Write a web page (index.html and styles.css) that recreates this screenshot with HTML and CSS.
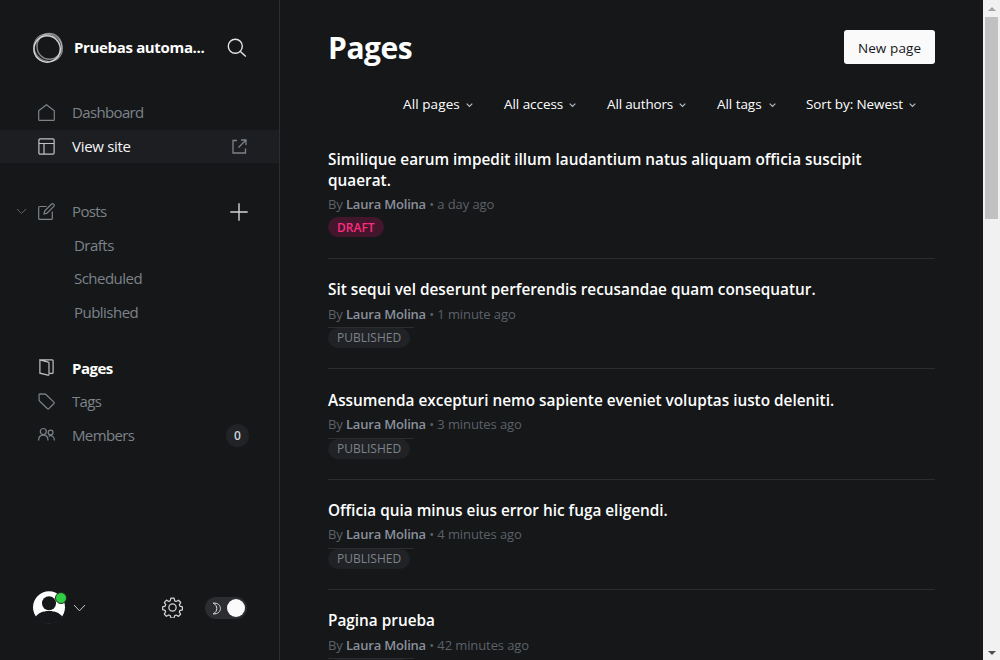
FILE: index.html
```html
<!DOCTYPE html>
<html lang="en">
<head>
<meta charset="utf-8">
<title>Pages</title>
<link rel="stylesheet" href="styles.css">
</head>
<body>
<div class="app">
  <aside class="sidebar">
    <header class="site">
      <svg class="site-logo" width="32" height="32" viewBox="0 0 32 32"><circle cx="15.1" cy="17" r="13.2" stroke-width="1.5"/><ellipse cx="17.4" cy="14.4" rx="12.4" ry="12.9" stroke-width="1.4" opacity=".6"/><ellipse cx="16" cy="15.8" rx="14.6" ry="13.3" transform="rotate(35 16 16)" stroke-width="1.2" opacity=".6"/></svg>
      <span class="site-name">Pruebas automa...</span>
      <svg class="search" width="20" height="20" viewBox="0 0 20 20"><circle cx="8.3" cy="8.3" r="7"/><path d="M13.4 13.4l5.4 5.2"/></svg>
    </header>
    <nav class="nav">
      <a class="item"><svg class="icon" viewBox="0 0 17 17"><path d="M.7 6.8L8.5.7l7.8 6.1v8.6q0 .9-.9.9H1.600q-.9 0-.9-.9z"/></svg><span class="label">Dashboard</span></a>
      <a class="item hover"><svg class="icon bright" viewBox="0 0 17 17"><rect x=".9" y=".9" width="15.200" height="15.200" rx="1.200"/><path d="M.9 5.500h15.200M6 5.500v10.600"/></svg><span class="label">View site</span>
        <svg class="external" width="15" height="15" viewBox="0 0 15 15"><path d="M5 1.500H1v12.500h12.500V9.500M6.500 8.500L14 1M9 1h5v5"/></svg></a>
      <a class="item posts"><svg class="caret" width="11" height="7" viewBox="0 0 11 7"><path d="M1 1l4.500 4.500L10 1"/></svg><svg class="icon" viewBox="0 0 17 17"><path d="M8.500 3.500H1.600q-.9 0-.9.900v11q0 .9.900.9h11.800q.9 0 .9-.9V8.500M6 11l.8-3.200L13.600 1q1.100-.8 2.100.2t.1 2.100L9 10.200z"/></svg><span class="label">Posts</span>
        <svg class="plus" width="18" height="18" viewBox="0 0 18 18"><path d="M9 .3v17.400M.3 9h17.400"/></svg></a>
      <a class="item sub"><span class="label">Drafts</span></a>
      <a class="item sub"><span class="label">Scheduled</span></a>
      <a class="item sub"><span class="label">Published</span></a>
      <a class="item current"><svg class="icon bright" viewBox="0 0 17 17"><path d="M1.900.8h12.300q.9 0 .9.900v11.800q0 .9-.9.900h-2.400M1.900.8v13.400l8 2q1.100.2 1.100-.9V4.200q0-.8-.8-1z"/></svg><span class="label">Pages</span></a>
      <a class="item"><svg class="icon" viewBox="0 0 17 17"><path d="M1 1.800q0-.9.900-.9l5.700.3 8.300 7.900q.7.700 0 1.400l-5 5.200q-.7.700-1.400 0L1.200 7.800z"/></svg><span class="label">Tags</span></a>
      <a class="item members"><svg class="icon" viewBox="0 0 17 17"><circle cx="5.300" cy="5.500" r="3"/><path d="M.6 14.500c0-3.300 1.900-5.300 4.700-5.300s4.700 2 4.700 5.300"/><circle cx="12.600" cy="6.500" r="2.400"/><path d="M10.600 10.200c3.300-1.500 5.800.5 5.800 4.300"/></svg><span class="label">Members</span><span class="count">0</span></a>
    </nav>
    <footer class="account">
      <span class="avatar"><svg width="34" height="34" viewBox="0 0 34 34"><circle cx="16" cy="16.200" r="16" fill="#fff"/><circle cx="16" cy="12.200" r="7" fill="#151719"/><path d="M2.600 26c2.400-4 7.400-6 13.400-6s11 2 13.400 6A16.500 16.500 0 0 1 2.600 26z" fill="#15171a"/></svg><i class="online"></i></span>
      <svg class="account-caret" width="13" height="8" viewBox="0 0 13 8"><path d="M1 1l5.500 5.800L12 1"/></svg>
      <svg class="gear" width="22" height="22" viewBox="0 0 22 22"><circle cx="11" cy="11" r="3.800"/><path d="M9.300 1.200h3.400l.6 2.800 1.500.7 2.600-1.300 2.200 2.400-1.400 2.400.5 1.400 2.700.8v3l-2.800.8-.5 1.400 1.400 2.500-2.200 2.200-2.500-1.400-1.500.6-.7 2.500H9.400l-.8-2.600-1.400-.6-2.600 1.400-2.200-2.300 1.400-2.500-.6-1.400-2.500-.7v-3l2.600-.8.6-1.500L2.500 5.600l2.200-2.300 2.500 1.400L8.600 4z"/></svg>
      <span class="toggle"><svg width="11" height="13" viewBox="0 0 11 13"><path d="M1.200 1.100C10.800.3 10.800 12.700 1.200 11.900 6 9.400 6 3.600 1.200 1.100z"/></svg><i class="knob"></i></span>
    </footer>
  </aside>
  <main class="main">
    <header class="top"><h1 class="heading">Pages</h1><button class="new-page">New page</button></header>
    <div class="filters">
      <span class="filter f-pages"><b>All pages</b><svg viewBox="0 0 7 5"><path d="M.7.700l2.800 2.800L6.300.7"/></svg></span>
      <span class="filter f-access"><b>All access</b><svg viewBox="0 0 7 5"><path d="M.7.700l2.800 2.800L6.300.7"/></svg></span>
      <span class="filter f-authors"><b>All authors</b><svg viewBox="0 0 7 5"><path d="M.7.700l2.800 2.800L6.300.7"/></svg></span>
      <span class="filter f-tags"><b>All tags</b><svg viewBox="0 0 7 5"><path d="M.7.700l2.800 2.800L6.300.7"/></svg></span>
      <span class="filter f-sort"><b>Sort by: Newest</b><svg viewBox="0 0 7 5"><path d="M.7.700l2.800 2.800L6.300.7"/></svg></span>
    </div>
    <section class="list">
      <article class="row two-line"><h3 class="title">Similique earum impedit illum laudantium natus aliquam officia suscipit<br>quaerat.</h3><p class="meta">By <b>Laura Molina</b> • a day ago</p><span class="badge draft">DRAFT</span></article>
      <article class="row"><h3 class="title">Sit sequi vel deserunt perferendis recusandae quam consequatur.</h3><p class="meta">By <b>Laura Molina</b> • 1 minute ago</p><div class="status"><span class="badge">PUBLISHED</span></div></article>
      <article class="row"><h3 class="title">Assumenda excepturi nemo sapiente eveniet voluptas iusto deleniti.</h3><p class="meta">By <b>Laura Molina</b> • 3 minutes ago</p><div class="status"><span class="badge">PUBLISHED</span></div></article>
      <article class="row"><h3 class="title">Officia quia minus eius error hic fuga eligendi.</h3><p class="meta">By <b>Laura Molina</b> • 4 minutes ago</p><div class="status"><span class="badge">PUBLISHED</span></div></article>
      <article class="row"><h3 class="title">Pagina prueba</h3><p class="meta">By <b>Laura Molina</b> • 42 minutes ago</p><div class="status"><span class="badge"></span></div></article>
    </section>
  </main>
  <div class="scrollbar"><i class="arrow up"></i><i class="thumb"></i><i class="arrow down"></i></div>
</div>
</body>
</html>
```
FILE: styles.css
```css
* { box-sizing: border-box; }
body { margin: 0; background: #151719; color: #fff; font-family: "Segoe UI", "Open Sans", "Noto Sans", sans-serif; }
svg { fill: none; stroke: currentColor; flex: none; display: block; }
.app { display: flex; width: 1000px; height: 660px; overflow: hidden; }

.sidebar { width: 280px; border-right: 1px solid #2b2d31; display: flex; flex-direction: column; flex: none; }
.site { display: flex; align-items: center; height: 32px; margin: 32px 32px 0; }
.site-logo { color: #d5d6d8; }
.site-name { flex: 1; margin-left: 10px; padding-bottom: 2px; font-size: 15px; font-weight: 700; white-space: nowrap; letter-spacing: -.34px; }
.search { color: #e5e6e7; stroke-width: 1.400; }
.nav { margin-top: 32px; flex: 1; }
.item { display: flex; align-items: center; height: 33.5px; padding: 0 30px 0 38px; color: #7c8389; font-size: 15px; letter-spacing: -.64px; }
.icon { width: 17px; height: 17px; margin-right: 17px; stroke-width: 1.200; }
.icon.bright { color: #bfc1c4; }
.label { flex: 1; padding-bottom: 1px; }
.item.hover { background: #1d1e22; color: #f4f5f6; letter-spacing: -.3px; }
.external { color: #7c8389; stroke-width: 1.300; margin-right: 2px; }
.item.posts { margin-top: 32px; padding-left: 16px; padding-right: 31px; }
.caret { margin-right: 11px; color: #5c6166; }
.plus { color: #d4d5d6; stroke-width: 1.400; }
.item.sub { padding-left: 74px; letter-spacing: -.52px; }
.item.current { margin-top: 22px; color: #fff; font-weight: 700; letter-spacing: -.5px; }
.item.current .label, .members .label { padding: 1px 0 0; }
.count { width: 23px; height: 23px; border-radius: 50%; background: #212327; color: #ced2d6; font-size: 12px; font-weight: 600; line-height: 23px; text-align: center; letter-spacing: 0; margin-top: 2px; }
.account { display: flex; align-items: center; height: 34px; margin: 0 32px 35px 33px; }
.avatar { position: relative; }
.avatar svg { stroke: none; }
.online { position: absolute; left: 22px; top: 1px; width: 12px; height: 12px; border: 1px solid #202b24; border-radius: 50%; background: #30cf43; }
.account-caret { margin-left: 6px; color: #c5c7ca; }
.gear { width: 21px; height: 21px; margin: 0 0 1px 76px; color: #d2d4d6; stroke-width: 1.300; stroke-linejoin: round; }
.toggle { display: flex; align-items: center; justify-content: space-between; width: 42px; height: 22px; border-radius: 11px; margin-left: 22px; padding: 0 2px 0 7px; background: #2b2d31; }
.toggle svg { color: #e0e1e2; }
.knob { width: 18px; height: 18px; border-radius: 50%; background: #fafafa; }

.main { width: 703px; padding: 30px 48px 0; flex: none; }
.top { display: flex; justify-content: space-between; height: 34px; }
.heading { margin: 0; font-size: 30px; line-height: 35px; font-weight: 700; letter-spacing: -.45px; }
.new-page { width: 91px; height: 34px; padding: 2px 0 0; border: 0; border-radius: 3px; background: #fafafa; color: #15171a; font: 500 13.500px "Segoe UI", "Open Sans", sans-serif; letter-spacing: .1px; white-space: nowrap; }
.filters { display: flex; height: 63px; padding: 30px 0 0 75px; }
.filter { display: flex; align-items: center; justify-content: space-between; height: 20px; font-size: 13.500px; white-space: nowrap; letter-spacing: -.05px; }
.filter b { font-weight: 400; }
.filter svg { width: 7px; height: 5px; color: #b9bdc1; margin-top: 2px; stroke-width: 1.200; }
.f-pages { width: 70px; letter-spacing: .1px; }
.f-access { width: 72px; margin-left: 31px; }
.f-authors { width: 79px; margin-left: 31px; letter-spacing: -.15px; }
.f-tags { width: 59px; margin-left: 31px; }
.f-sort { width: 110px; margin-left: 30px; letter-spacing: -.1px; }
.row { height: 110.300px; padding-top: 20.200px; border-bottom: 1px solid #2b2d31; }
.row.two-line { height: 132.200px; padding-top: 21.500px; }
.title { margin: 0; font-size: 15.350px; font-weight: 600; line-height: 21.300px; white-space: nowrap; }
.meta { margin: 0; height: 26.600px; line-height: 26.600px; font-size: 13px; color: #5c6168; white-space: nowrap; letter-spacing: -.1px; }
.two-line .meta { height: 26px; line-height: 26px; }
.meta b { color: #8a909b; font-weight: 600; letter-spacing: -.2px; }
.status { width: 86px; border-top: 1px solid #2b2d31; }
.badge { display: block; width: 82px; height: 20px; border-radius: 10px; padding-left: 9px; background: #212226; color: #7c8389; font-size: 12px; line-height: 20px; font-weight: 500; }
.badge.draft { width: 56px; background: #43162d; color: #fb2d7d; font-weight: 600; line-height: 21px; }

.scrollbar { width: 17px; background: #f1f1f1; display: flex; flex-direction: column; align-items: center; padding: 7px 0 5px; }
.arrow { border: 4px solid transparent; }
.arrow.up { border-top: 0; border-bottom-color: #a3a3a3; }
.thumb { width: 13px; height: 202px; margin: 6px 0 auto; background: #c1c1c1; }
.arrow.down { border-bottom: 0; border-top-color: #505050; }
```
